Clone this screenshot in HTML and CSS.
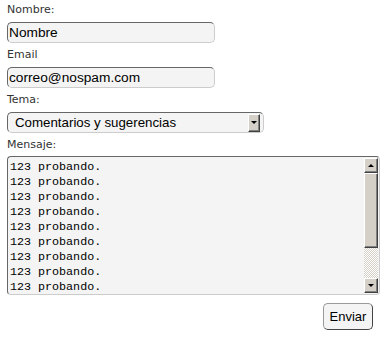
FILE: index.html
```html
<!DOCTYPE html>
<html lang="es">
<head>
<meta charset="utf-8">
<title>Contacto</title>
<link rel="stylesheet" href="styles.css">
</head>
<body>
<form class="form">
  <label class="label" for="nombre">Nombre:</label>
  <input class="field" id="nombre" type="text" value="Nombre">
  <label class="label" for="email">Email</label>
  <input class="field" id="email" type="text" value="correo@nospam.com">
  <label class="label">Tema:</label>
  <div class="select">
    <span class="select-text">Comentarios y sugerencias</span>
    <span class="select-btn"><span class="arrow-down"></span></span>
  </div>
  <label class="label label-tight">Mensaje:</label>
  <div class="textarea">
    <div class="ta-text">123 probando.<br>123 probando.<br>123 probando.<br>123 probando.<br>123 probando.<br>123 probando.<br>123 probando.<br>123 probando.<br>123 probando.</div>
    <div class="scrollbar">
      <span class="sb-btn"><span class="arrow-up"></span></span>
      <span class="sb-thumb"></span>
      <span class="sb-track"></span>
      <span class="sb-btn"><span class="arrow-down"></span></span>
    </div>
  </div>
  <div class="actions"><button class="btn" type="button">Enviar</button></div>
</form>
</body>
</html>
```
FILE: styles.css
```css
html, body {
  margin: 0;
  padding: 0;
  background: #fff;
}

.form {
  display: flex;
  flex-direction: column;
  align-items: flex-start;
  padding: 3px 0 0 7px;
}

.label {
  font-family: "DejaVu Sans", sans-serif;
  font-size: 11px;
  line-height: 14px;
  color: #333;
  margin-bottom: 5px;
}

.label-tight {
  margin-bottom: 4px;
}

.field {
  box-sizing: border-box;
  width: 208px;
  height: 21px;
  margin: 0 0 5px 0;
  padding: 0 1px;
  border: 1px solid;
  border-color: #666 #ccc #ccc #666;
  border-radius: 5px;
  background: #f4f4f4;
  font-family: "Liberation Sans", Arial, sans-serif;
  font-size: 13.7px;
  color: #000;
  outline: none;
}

.select {
  box-sizing: border-box;
  width: 257px;
  height: 21px;
  margin-bottom: 5px;
  display: flex;
  align-items: center;
  justify-content: space-between;
  padding: 0 3px 0 7px;
  border: 1px solid;
  border-color: #666 #ccc #ccc #666;
  border-radius: 5px;
  background: #f4f4f4;
  font-family: "Liberation Sans", Arial, sans-serif;
  font-size: 13.3px;
  color: #000;
}

.select-btn,
.sb-btn {
  box-sizing: border-box;
  display: flex;
  align-items: center;
  justify-content: center;
  background: #d4d0c8;
  border: 1px solid;
  border-color: #fff #404040 #404040 #fff;
  box-shadow: inset -1px -1px 0 #808080;
}

.select-btn {
  width: 12px;
  height: 18px;
}

.arrow-down {
  width: 0;
  height: 0;
  border-left: 3px solid transparent;
  border-right: 3px solid transparent;
  border-top: 3px solid #000;
}

.arrow-up {
  width: 0;
  height: 0;
  border-left: 3px solid transparent;
  border-right: 3px solid transparent;
  border-bottom: 3px solid #000;
}

.textarea {
  box-sizing: border-box;
  width: 373px;
  height: 139px;
  display: flex;
  justify-content: space-between;
  padding: 1px 1px 1px 2px;
  border: 1px solid;
  border-color: #666 #ccc #ccc #666;
  border-radius: 4px;
  background: #f4f4f4;
}

.ta-text {
  padding-top: 2px;
  font-family: "Liberation Mono", "Courier New", monospace;
  font-size: 11.7px;
  line-height: 15px;
  color: #000;
}

.scrollbar {
  width: 14px;
  display: flex;
  flex-direction: column;
}

.sb-btn {
  width: 14px;
  height: 15px;
}

.sb-thumb {
  box-sizing: border-box;
  height: 75px;
  background: #d4d0c8;
  border: 1px solid;
  border-color: #fff #404040 #404040 #fff;
  box-shadow: inset -1px -1px 0 #808080;
}

.sb-track {
  flex: 1;
  background: repeating-conic-gradient(#d4d0c8 0 25%, #fff 0 50%) 0 0 / 2px 2px;
}

.actions {
  width: 366px;
  display: flex;
  justify-content: flex-end;
  margin-top: 8px;
}

.btn {
  box-sizing: border-box;
  width: 50px;
  height: 27px;
  padding: 0;
  border: 1px solid;
  border-color: #999 #444 #444 #999;
  border-radius: 5px;
  background: #f4f4f4;
  font-family: "Liberation Sans", Arial, sans-serif;
  font-size: 13px;
  color: #000;
}
```
